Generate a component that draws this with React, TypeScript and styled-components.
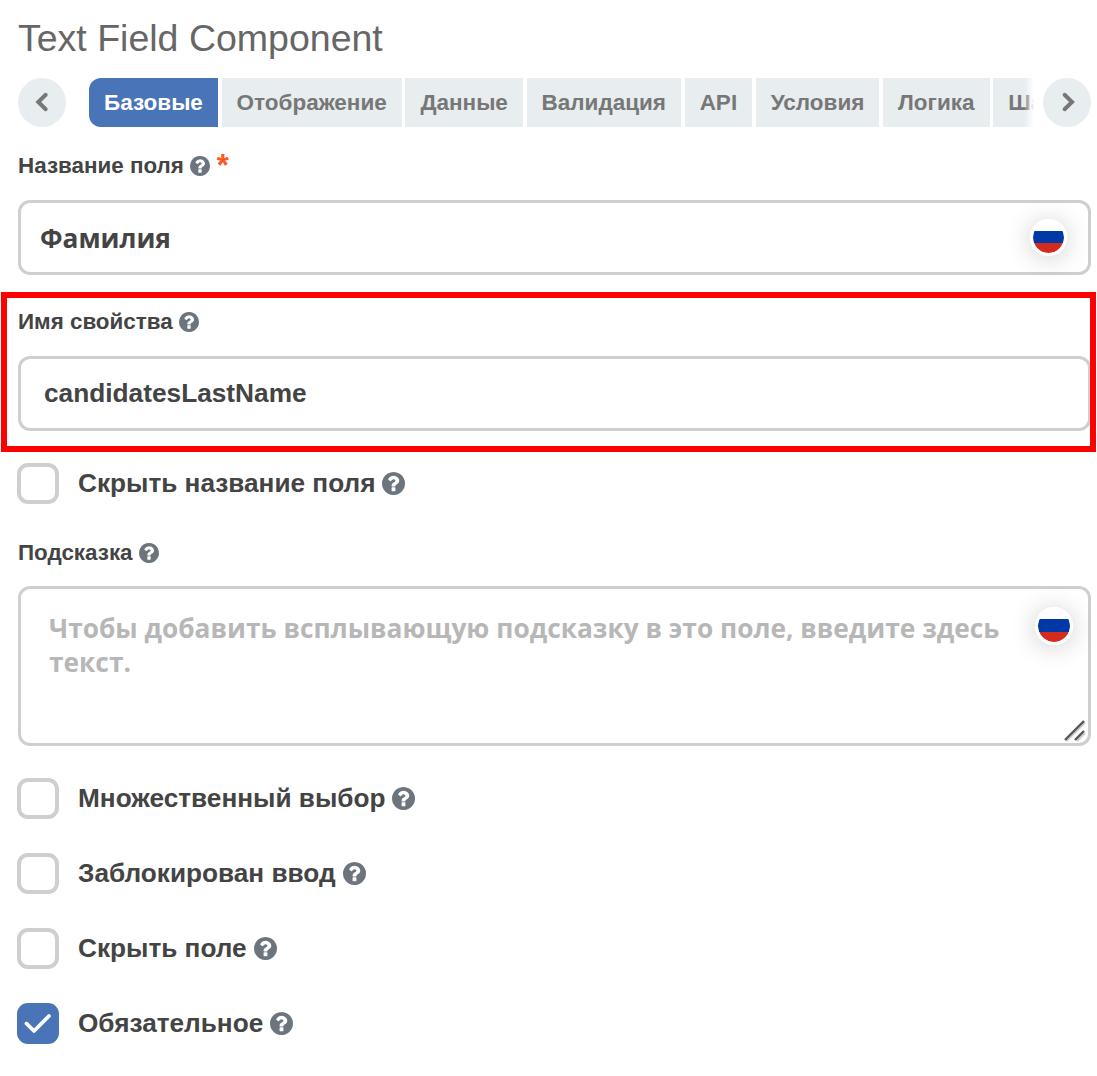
import React, { useState } from "react";
import styled, { createGlobalStyle } from "styled-components";

const GlobalStyle = createGlobalStyle`
  *, *::before, *::after { box-sizing: border-box; }
  body {
    margin: 0;
    background: #fff;
    color: #444;
    font-family: "Liberation Sans", Arial, sans-serif;
  }
`;

const Page = styled.main`
  display: flex;
  flex-direction: column;
  width: 1097px;
  height: 1076px;
  padding: 16px 6px 0 18px;
  overflow: hidden;
`;

const Title = styled.h1`
  margin: 0;
  height: 62px;
  font-size: 37.5px;
  font-weight: 400;
  line-height: 44px;
  color: #666;
`;

const TabBar = styled.nav`
  display: flex;
  height: 49px;
  flex: none;
`;

const RoundButton = styled.button`
  display: grid;
  place-items: center;
  flex: none;
  width: 48px;
  height: 49px;
  padding: 0 0 1px;
  border: 0;
  border-radius: 50%;
  background: #e8edef;
  color: #777;
`;

const TabViewport = styled.div`
  position: relative;
  flex: 1;
  margin: 0 7px 0 23px;
  overflow: hidden;

  &::after {
    content: "";
    position: absolute;
    inset: 0 0 0 auto;
    width: 12px;
    background: linear-gradient(to right, rgba(255, 255, 255, 0), #fff 85%);
  }
`;

const TabList = styled.div`
  display: flex;
  gap: 3.65px;
  width: max-content;
  height: 100%;
`;

const Tab = styled.button<{ $active?: boolean }>`
  flex: none;
  padding: 0 15px;
  border: 0;
  border-radius: ${(p) => (p.$active ? "12px 0 0 12px" : "0")};
  background: ${(p) => (p.$active ? "#4a74b8" : "#e8edef")};
  color: ${(p) => (p.$active ? "#fff" : "#777")};
  font: 700 22.5px/49px "Liberation Sans", Arial, sans-serif;
  white-space: nowrap;
`;

const Field = styled.section<{ $top: number }>`
  position: relative;
  flex: none;
  margin-top: ${(p) => p.$top}px;
`;

const Highlight = styled.div`
  position: absolute;
  z-index: 1;
  top: -17px;
  left: -17px;
  width: 1095px;
  height: 160px;
  border: 6px solid #f00;
  pointer-events: none;
`;

const FieldLabel = styled.div<{ $gap?: number }>`
  display: flex;
  align-items: center;
  gap: 6px;
  height: 26px;
  margin-bottom: ${(p) => p.$gap ?? 21}px;
  font-size: 22.4px;
  font-weight: 700;
  line-height: 26px;
`;

const HelpSvg = styled.svg`
  flex: none;
  color: #6c757d;
`;

const Required = styled.span`
  margin-left: 1px;
  color: #ff5722;
  font-size: 31px;
  line-height: 26px;
  height: 26px;
`;

const InputBox = styled.div`
  display: flex;
  align-items: center;
  justify-content: space-between;
  width: 1073px;
  height: 75px;
  padding: 0 21px 0 19px;
  border: 3px solid #cfcfcf;
  border-radius: 12px;
`;

const Value = styled.span<{ $open?: boolean }>`
  padding: ${(p) => (p.$open ? "0" : "0 0 2px 4px")};
  font-family: ${(p) => (p.$open ? '"Open Sans"' : '"Liberation Sans"')}, sans-serif;
  font-size: 26.25px;
  font-weight: 700;
  line-height: 36px;
`;

const TextBox = styled.div`
  position: relative;
  display: flex;
  align-items: flex-start;
  justify-content: space-between;
  width: 1073px;
  height: 160px;
  padding: 18px 15px 0 28px;
  border: 3px solid #cfcfcf;
  border-radius: 12px;
`;

const Placeholder = styled.p`
  margin: 4px 0 0;
  width: 970px;
  color: #b7b7b7;
  font: 700 26.3px/34px "Open Sans", sans-serif;
`;

const FlagButton = styled.span<{ $size: number }>`
  display: block;
  flex: none;
  width: ${(p) => p.$size}px;
  height: ${(p) => p.$size}px;
  border: 3px solid #fff;
  border-radius: 50%;
  background: linear-gradient(#fff 0 29%, #0039a6 29% 69%, #d52b1e 69%) padding-box;
  box-shadow: 0 2px 26px rgba(0, 0, 0, 0.2);
`;

const Resizer = styled.svg`
  position: absolute;
  right: 2px;
  bottom: 1px;
`;

const CheckRow = styled.label<{ $top: number }>`
  display: flex;
  align-items: center;
  flex: none;
  height: 41px;
  margin: ${(p) => p.$top}px 0 0 -1px;
`;

const HiddenInput = styled.input`
  position: absolute;
  opacity: 0;
  pointer-events: none;
`;

const CheckBox = styled.span<{ $checked: boolean }>`
  display: grid;
  place-items: center;
  flex: none;
  width: 42px;
  height: 41px;
  border: ${(p) => (p.$checked ? "0" : "4px solid #cfcfcf")};
  border-radius: 11px;
  background: ${(p) => (p.$checked ? "#4a74b8" : "#fff")};
`;

const CheckText = styled.span`
  margin: 0 7px 0 19px;
  padding-bottom: 2px;
  font-size: 26.2px;
  font-weight: 700;
  line-height: 30px;
`;

const tabs = ["Базовые", "Отображение", "Данные", "Валидация", "API", "Условия", "Логика", "Шаблон"];

function Chevron({ right }: { right?: boolean }) {
  return (
    <svg width="16" height="22" viewBox="0 0 16 22" fill="none" stroke="currentColor" strokeWidth="4" strokeLinecap="round">
      <path d={right ? "M5.6 3.8 L13 11 L5.6 18.2" : "M11.7 3.8 L4.3 11 L11.7 18.2"} />
    </svg>
  );
}

function HelpIcon({ size }: { size: number }) {
  return (
    <HelpSvg width={size} height={size} viewBox="0 0 1536 1536" fill="currentColor">
      <path d="M896 1248v-192q0-14-9-23t-23-9H672q-14 0-23 9t-9 23v192q0 14 9 23t23 9h192q14 0 23-9t9-23zm256-672q0-88-55.5-163T958 297t-170-41q-243 0-371 213-15 24 8 42l132 100q7 6 19 6 16 0 25-12 53-68 86-92 34-24 86-24 48 0 85.5 26t37.5 59q0 38-20 61t-68 45q-63 28-115.5 86.5T640 892v36q0 14 9 23t23 9h192q14 0 23-9t9-23q0-19 21.5-49.5T972 829q32-18 49-28.5t46-35 44.5-48 28-60.5 12.5-81zm384 192q0 209-103 385.5T1153.5 1433 768 1536t-385.5-103T103 1153.5 0 768t103-385.5T382.5 103 768 0t385.5 103T1433 382.5 1536 768z" />
    </HelpSvg>
  );
}

function Option({ text, top, initial = false }: { text: string; top: number; initial?: boolean }) {
  const [checked, setChecked] = useState(initial);
  return (
    <CheckRow $top={top}>
      <HiddenInput type="checkbox" checked={checked} onChange={() => setChecked(!checked)} />
      <CheckBox $checked={checked}>
        {checked && (
          <svg width="42" height="41" viewBox="0 0 42 41" fill="none" stroke="#fff" strokeWidth="3.8" strokeLinecap="round" strokeLinejoin="round">
            <path d="M9.5 20.5 L17 28 L32 13" />
          </svg>
        )}
      </CheckBox>
      <CheckText>{text}</CheckText>
      <HelpIcon size={23} />
    </CheckRow>
  );
}

export default function App() {
  return (
    <>
      <GlobalStyle />
      <Page>
        <Title>Text Field Component</Title>
        <TabBar>
          <RoundButton><Chevron /></RoundButton>
          <TabViewport>
            <TabList>
              {tabs.map((tab, i) => (
                <Tab key={tab} $active={i === 0}>{tab}</Tab>
              ))}
            </TabList>
          </TabViewport>
          <RoundButton><Chevron right /></RoundButton>
        </TabBar>

        <Field $top={26}>
          <FieldLabel>
            Название поля
            <HelpIcon size={20} />
            <Required>*</Required>
          </FieldLabel>
          <InputBox>
            <Value $open>Фамилия</Value>
            <FlagButton $size={37} />
          </InputBox>
        </Field>

        <Field $top={34}>
          <Highlight />
          <FieldLabel>
            Имя свойства
            <HelpIcon size={20} />
          </FieldLabel>
          <InputBox>
            <Value>candidatesLastName</Value>
          </InputBox>
        </Field>

        <Option text="Скрыть название поля" top={32} />

        <Field $top={36}>
          <FieldLabel $gap={20}>
            Подсказка
            <HelpIcon size={20} />
          </FieldLabel>
          <TextBox>
            <Placeholder>Чтобы добавить всплывающую подсказку в это поле, введите здесь текст.</Placeholder>
            <FlagButton $size={38} />
            <Resizer width="22" height="22" viewBox="0 0 22 22" fill="none">
              <path stroke="#ccc" strokeWidth="2" d="M2.5 21 L21 2.5 M13 21 L21 13" />
              <path stroke="#555" strokeWidth="2.4" d="M1 20 L20 1 M11 20 L20 11" />
            </Resizer>
          </TextBox>
        </Field>

        <Option text="Множественный выбор" top={32} />
        <Option text="Заблокирован ввод" top={34} />
        <Option text="Скрыть поле" top={34} />
        <Option text="Обязательное" top={34} initial />
      </Page>
    </>
  );
}
